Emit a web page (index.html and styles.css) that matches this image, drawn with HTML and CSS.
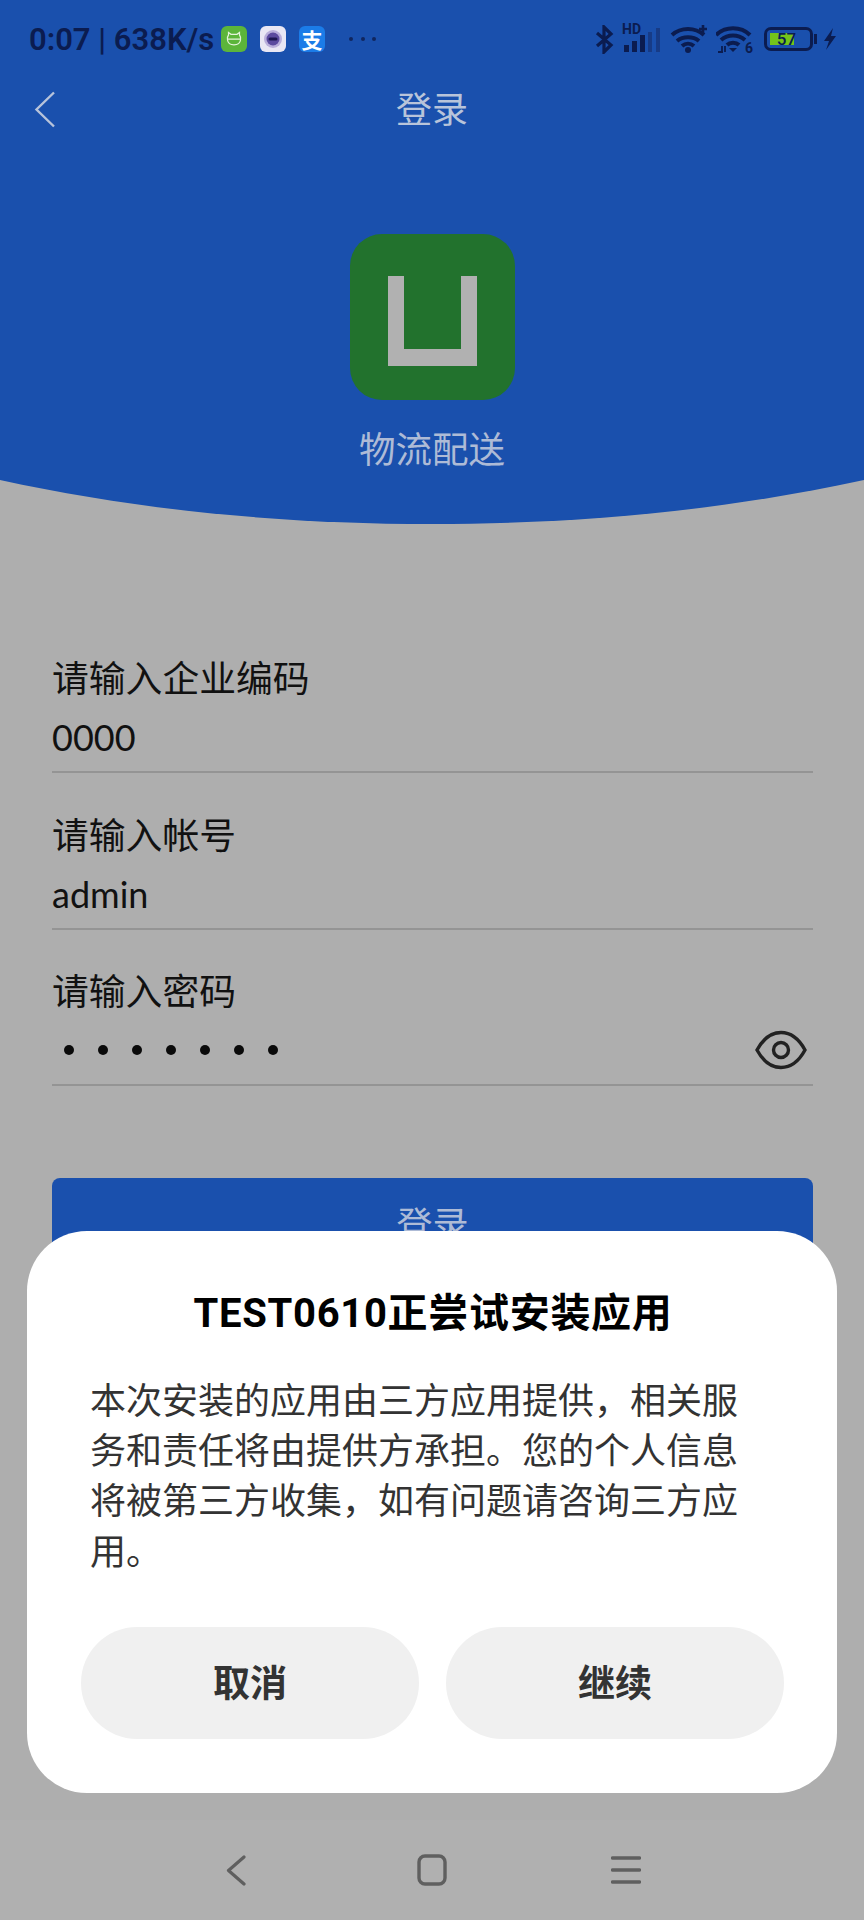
FILE: index.html
```html
<!DOCTYPE html>
<html lang="zh-CN">
<head>
<meta charset="utf-8">
<title>登录</title>
<link rel="stylesheet" href="styles.css">
</head>
<body>
<div class="page">
  <header class="hero">
    <div class="statusbar">
      <span class="time">0:07 | 638K/s</span>
      <span class="notif notif-green">
        <svg viewBox="0 0 26 26" width="26" height="26"><rect width="26" height="26" rx="6" fill="#5cb53a"/><path d="M7.500 9V6.500l2.500 1.800h6l2.500-1.800V9c1 1.200 1.300 3 1 5-.4 3.200-3 4.800-6.500 4.800S6.900 17.200 6.500 14c-.3-2 0-3.800 1-5zM7 13.200h12" fill="none" stroke="#e4f3da" stroke-width="1.200"/></svg>
      </span>
      <span class="notif notif-white">
        <svg viewBox="0 0 26 26" width="26" height="26"><rect width="26" height="26" rx="6" fill="#e9e7f4"/><circle cx="13" cy="13" r="9" fill="#b9aedb"/><circle cx="13" cy="13" r="6.500" fill="#5b4a9e"/><rect x="8.500" y="11.500" width="9" height="3" rx="1.500" fill="#1d1650"/></svg>
      </span>
      <span class="notif notif-blue">支</span>
      <span class="more"><i></i><i></i><i></i></span>
      <span class="sys">
        <svg class="bt" viewBox="0 0 19 29" width="19" height="29"><path d="M2 8l14 12-7 7V2l7 7L2 21" fill="none" stroke="#0b1c50" stroke-width="3.200"/></svg>
        <span class="sig">
          <span class="hd">HD</span>
          <svg viewBox="0 0 39 28" width="39" height="28"><rect x="2" y="20" width="5" height="7" fill="#0b1c50"/><rect x="10" y="16" width="5" height="11" fill="#0b1c50"/><rect x="18" y="10" width="5" height="17" fill="#0b1c50"/><rect x="26" y="7" width="4" height="20" fill="#173b86"/><rect x="34" y="3" width="4" height="24" fill="#173b86"/></svg>
        </span>
        <svg class="wifi" viewBox="0 0 39 28" width="39" height="28"><path d="M2 10c9-8 23-8 32 0M7 16c6-5 16-5 22 0M12 21c3.500-3 8.500-3 12 0" fill="none" stroke="#0b1c50" stroke-width="4"/><circle cx="18" cy="25" r="3" fill="#0b1c50"/><path d="M33 0v8M29 4h8" stroke="#0b1c50" stroke-width="2.600"/></svg>
        <span class="wifi6">
          <svg viewBox="0 0 36 28" width="36" height="28"><path d="M0 10c9-9 25-9 34 0M5 15c7-6 17-6 24 0M11 20c3-3 9-3 12 0" fill="none" stroke="#0b1c50" stroke-width="4"/><path d="M13 23h8l-4 4z" fill="#0b1c50"/><path d="M2 27h5M6 21v6M9 21v6" stroke="#0b1c50" stroke-width="1.800"/></svg>
          <span class="six">6</span>
        </span>
        <span class="battery"><span class="battery-fill"></span><span class="battery-num">57</span></span>
        <svg class="bolt" viewBox="0 0 14 22" width="14" height="22"><path d="M10 0L1 13h5l-3 9 10-14H8z" fill="#0b1c50"/></svg>
      </span>
    </div>
    <div class="navrow">
      <svg class="back" viewBox="0 0 22 37" width="22" height="37"><path d="M20 1.500L2.500 18.500 20 35.500" fill="none" stroke="#b7c3da" stroke-width="2.400"/></svg>
      <h1 class="navtitle">登录</h1>
    </div>
    <div class="logo">
      <span class="logo-u"></span>
    </div>
    <div class="appname">物流配送</div>
  </header>
  <svg class="curve" viewBox="0 0 864 44" width="864" height="44" preserveAspectRatio="none"><path d="M0 0H864C730 29 590 44 432 44S134 29 0 0z" fill="#1a50ad"/></svg>

  <main class="form">
    <div class="field">
      <label class="label">请输入企业编码</label>
      <div class="value">0000</div>
    </div>
    <div class="field">
      <label class="label">请输入帐号</label>
      <div class="value">admin</div>
    </div>
    <div class="field">
      <label class="label">请输入密码</label>
      <div class="value value-pass">
        <span class="dots"><i></i><i></i><i></i><i></i><i></i><i></i><i></i></span>
        <svg class="eye" viewBox="0 0 52 40" width="52" height="40"><path d="M2 20C8 9 16 2.500 26 2.500S44 9 50 20C44 31 36 37.500 26 37.500S8 31 2 20z" fill="none" stroke="#222" stroke-width="3.400"/><circle cx="26" cy="20" r="7.500" fill="none" stroke="#222" stroke-width="3.400"/></svg>
      </div>
    </div>
    <button class="submit">登录</button>
  </main>

  <nav class="sysnav">
    <svg class="nav-back" viewBox="0 0 20 31" width="20" height="31"><path d="M18 2L2.500 15.500 18 29" fill="none" stroke="#5f5f5f" stroke-width="3.200" stroke-linecap="round" stroke-linejoin="round"/></svg>
    <svg class="nav-home" viewBox="0 0 30 32" width="30" height="32"><rect x="2" y="2" width="26" height="28" rx="6" fill="none" stroke="#5f5f5f" stroke-width="3.400"/></svg>
    <svg class="nav-menu" viewBox="0 0 30 30" width="30" height="30"><path d="M1.500 3h27M1.500 15h27M1.500 27h27" stroke="#5f5f5f" stroke-width="3.400" stroke-linecap="round"/></svg>
  </nav>

  <section class="dialog">
    <h2 class="dialog-title">TEST0610正尝试安装应用</h2>
    <p class="dialog-body">本次安装的应用由三方应用提供，相关服务和责任将由提供方承担。您的个人信息将被第三方收集，如有问题请咨询三方应用。</p>
    <div class="dialog-actions">
      <button class="pill">取消</button>
      <button class="pill">继续</button>
    </div>
  </section>
</div>
</body>
</html>
```

FILE: styles.css
```css
* { box-sizing: border-box; }
html, body { margin: 0; padding: 0; }
body {
  font-family: Roboto, "Noto Sans CJK SC", sans-serif;
  background: #aeaeae;
}
.page {
  position: relative;
  width: 864px;
  height: 1920px;
  overflow: hidden;
  display: flex;
  flex-direction: column;
  background: #aeaeae;
}

/* Blue header */
.hero {
  background: #1a50ad;
  height: 480px;
  display: flex;
  flex-direction: column;
  align-items: center;
  flex: none;
}
.statusbar {
  width: 100%;
  height: 78px;
  padding-left: 29px;
  display: flex;
  align-items: center;
  color: #0b1c50;
}
.time {
  font-family: Roboto, sans-serif;
  font-size: 31px;
  font-weight: 600;
  white-space: nowrap;
  width: 192px;
  flex: none;
}
.notif {
  display: flex;
  width: 26px;
  height: 26px;
  margin-right: 13px;
  flex: none;
}
.notif-blue {
  background: #1b7ce8;
  border-radius: 6px;
  color: #fff;
  font-family: "Noto Sans CJK SC", sans-serif;
  font-size: 21px;
  font-weight: 700;
  line-height: 26px;
  justify-content: center;
}
.more {
  margin-left: 11px;
  width: 27px;
  flex: none;
  display: flex;
  justify-content: space-between;
}
.more i {
  display: block;
  width: 4px;
  height: 4px;
  border-radius: 50%;
  background: #10265f;
}
.sys {
  margin-left: 219px;
  display: flex;
  align-items: center;
  flex: none;
}
.bt { margin-right: 8px; }
.sig { position: relative; display: block; width: 39px; height: 28px; margin-right: 9px; }
.wifi { margin-right: 7px; }
.wifi6 { position: relative; display: block; width: 36px; height: 28px; margin-right: 12px; }
.hd {
  position: absolute;
  left: 0;
  top: -3px;
  font: 700 14px/14px Roboto, sans-serif;
  color: #0b1c50;
}
.six {
  position: absolute;
  right: -1px;
  bottom: -2px;
  font: 700 14px/14px Roboto, sans-serif;
  color: #0b1c50;
}
.battery {
  position: relative;
  width: 49px;
  height: 24px;
  border: 3px solid #0b1c50;
  border-radius: 7px;
  margin-right: 10px;
  display: block;
}
.battery::after {
  content: "";
  position: absolute;
  right: -7px;
  top: 4px;
  width: 3px;
  height: 10px;
  background: #0b1c50;
}
.battery-fill {
  position: absolute;
  left: 3px;
  top: 3px;
  bottom: 3px;
  width: 24px;
  background: #74c41a;
}
.battery-num {
  position: absolute;
  inset: 0;
  text-align: center;
  margin-right: 4px;
  font: 500 17px/18px Roboto, sans-serif;
  color: #0b1c50;
}

.navrow {
  position: relative;
  width: 100%;
  height: 62px;
  display: flex;
  align-items: center;
  justify-content: center;
}
.back { position: absolute; left: 34px; top: 13px; }
.navtitle {
  margin: -4px 0 0;
  font-family: "Noto Sans CJK SC", sans-serif;
  font-size: 36px;
  font-weight: 400;
  line-height: 50px;
  color: #b8c4da;
}
.logo {
  margin-top: 94px;
  width: 165px;
  height: 166px;
  border-radius: 32px;
  background: #22722d;
  display: flex;
  justify-content: center;
  padding-top: 42px;
}
.logo-u {
  display: block;
  width: 89px;
  height: 90px;
  border: 16px solid #b1b1b1;
  border-top: 0;
  border-bottom-width: 17px;
}
.appname {
  margin-top: 23px;
  font-family: "Noto Sans CJK SC", sans-serif;
  font-size: 36.5px;
  line-height: 50px;
  color: #aebbd6;
}
.curve { display: block; flex: none; }

/* Form */
.form {
  flex: 1;
  padding: 128px 51px 0 52px;
  display: flex;
  flex-direction: column;
  gap: 35.5px;
  color: #111;
}
.field { height: 121px; border-bottom: 2px solid #949494; flex: none; }
.label {
  display: block;
  margin-top: -1px;
  height: 51px;
  font-family: "Noto Sans CJK SC", sans-serif;
  font-size: 36.8px;
  line-height: 50px;
  color: #111;
}
.value {
  margin-top: 10px;
  font-family: Lato, sans-serif;
  font-size: 36px;
  line-height: 50px;
  height: 50px;
  color: #111;
}
.value-pass {
  display: flex;
  align-items: center;
  justify-content: space-between;
}
.dots {
  display: flex;
  gap: 24px;
  padding-left: 12px;
}
.dots i {
  display: block;
  width: 10px;
  height: 10px;
  border-radius: 50%;
  background: #0a0a0a;
}
.eye { margin-right: 6px; }
.submit {
  margin-top: 56px;
  height: 88px;
  flex: none;
  border: 0;
  border-radius: 8px;
  background: #1a50ad;
  color: #aebbd6;
  font-family: "Noto Sans CJK SC", sans-serif;
  font-size: 36px;
  padding: 0;
}

/* System navigation */
.sysnav {
  height: 100px;
  flex: none;
  display: flex;
  align-items: center;
  padding-left: 226px;
  background: #b0b0b0;
}
.nav-home { margin-left: 171px; }
.nav-menu { margin-left: 164px; }

/* Dialog */
.dialog {
  position: absolute;
  left: 27px;
  top: 1231px;
  width: 810px;
  height: 562px;
  background: #fff;
  border-radius: 60px;
  padding: 58px 52px 53px 54px;
}
.dialog-title {
  margin: 0;
  text-align: center;
  font-family: Roboto, "Noto Sans CJK SC", sans-serif;
  font-size: 40px;
  font-weight: 700;
  line-height: 50px;
  letter-spacing: .7px;
  color: #000;
  white-space: nowrap;
}
.dialog-body {
  margin: 34px 0 0;
  padding-left: 9px;
  width: 665px;
  font-family: "Noto Sans CJK SC", sans-serif;
  font-size: 36px;
  line-height: 50.2px;
  color: #333;
}
.dialog-actions {
  margin-top: 53px;
  display: grid;
  grid-template-columns: 338px 338px;
  gap: 27px;
}
.pill {
  height: 112px;
  border: 0;
  border-radius: 56px;
  background: #f0f0f0;
  color: #333;
  font-family: "Noto Sans CJK SC", sans-serif;
  font-size: 37px;
  font-weight: 700;
  padding: 0 0 4px;
}
```
